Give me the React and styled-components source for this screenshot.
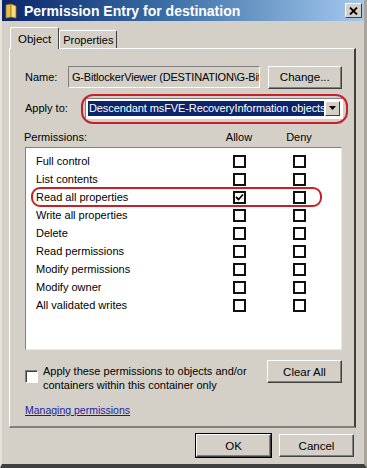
import styled, { createGlobalStyle } from 'styled-components';

const GlobalStyle = createGlobalStyle`
  html, body {
    margin: 0;
    padding: 0;
    background: #d4d0c8;
  }
  *, *::before, *::after { box-sizing: border-box; }
`;

const Window = styled.div`
  width: 367px;
  height: 468px;
  background: #d4d0c8;
  border-left: 2px solid #e4e1da;
  border-right: 3px solid #a9a59d;
  border-bottom: 4px solid #404040;
  font-family: 'Liberation Sans', Arial, sans-serif;
  font-size: 11px;
  color: #000;
  display: flex;
  flex-direction: column;
  overflow: hidden;
`;

const TitleBar = styled.div`
  height: 21px;
  flex-shrink: 0;
  margin-left: -2px;
  margin-right: -3px;
  display: flex;
  align-items: center;
  padding: 0 5px 0 5px;
  background: linear-gradient(to right, #0a246a 0%, #3a6ea5 45%, #a6caf0 100%);
`;

const Title = styled.span`
  flex: 1;
  margin-left: 5px;
  color: #fff;
  font-weight: bold;
  font-size: 14px;
`;

const CloseButton = styled.div`
  width: 17px;
  height: 15px;
  background: #d4d0c8;
  border-top: 1px solid #fff;
  border-left: 1px solid #fff;
  border-right: 1px solid #404040;
  border-bottom: 1px solid #404040;
  display: flex;
  align-items: center;
  justify-content: center;
`;

const Body = styled.div`
  flex: 1;
  display: flex;
  flex-direction: column;
  padding: 6px 8px 0 7px;
`;

const TabRow = styled.div`
  display: flex;
  align-items: flex-end;
  height: 21px;
  flex-shrink: 0;
  padding-left: 1px;
`;

const Tab = styled.div`
  height: ${p => (p.$active ? '22px' : '18px')};
  padding: 0 ${p => (p.$active ? '7px' : '3px')};
  display: flex;
  align-items: center;
  background: #d4d0c8;
  border-top: 1px solid #fff;
  border-left: 1px solid #fff;
  border-right: 1px solid #404040;
  border-radius: 2px 2px 0 0;
  margin-bottom: ${p => (p.$active ? '-1px' : '0')};
  position: relative;
  z-index: ${p => (p.$active ? 1 : 0)};
  font-size: ${p => (p.$active ? '11.5px' : '11px')};
`;

const Panel = styled.div`
  height: 380px;
  flex-shrink: 0;
  border-top: 1px solid #fff;
  border-left: 1px solid #fff;
  border-right: 2px solid #404040;
  border-bottom: 2px solid #808080;
  padding: 17px 12px 0 15px;
  display: flex;
  flex-direction: column;

  & > * { flex-shrink: 0; }
`;

const FieldRow = styled.div`
  display: flex;
  align-items: center;
  height: 22px;
  margin-bottom: ${p => p.$gap || 0}px;
`;

const Label = styled.span`
  width: ${p => p.$w}px;
  flex-shrink: 0;
  font-size: 11px;
`;

const TextBox = styled.div`
  width: 193px;
  height: 22px;
  padding: 0 3px;
  display: flex;
  align-items: center;
  background: #d4d0c8;
  border-top: 1px solid #808080;
  border-left: 1px solid #808080;
  border-right: 1px solid #fff;
  border-bottom: 1px solid #fff;
  white-space: nowrap;
  overflow: hidden;
  font-size: 11px;
  letter-spacing: -0.2px;
`;

const Button = styled.div`
  width: ${p => p.$w || 75}px;
  height: 23px;
  margin-left: ${p => p.$ml || 0}px;
  display: flex;
  align-items: center;
  justify-content: center;
  background: #d4d0c8;
  border-top: 1px solid #fff;
  border-left: 1px solid #fff;
  border-right: 1px solid #404040;
  border-bottom: 1px solid #404040;
  box-shadow: inset -1px -1px 0 #808080;
  outline: ${p => (p.$default ? '1px solid #000' : 'none')};
  font-size: 11.5px;
`;

const SelectWrap = styled.div`
  position: relative;
  width: 258px;
  height: 21px;

  &::after {
    content: '';
    position: absolute;
    inset: -4px -5px -5px -4px;
    border: 2px solid #c8202a;
    border-radius: 12px;
    pointer-events: none;
  }
`;

const Select = styled.div`
  height: 100%;
  display: flex;
  align-items: center;
  padding: 2px;
  background: #fff;
  border-top: 1px solid #808080;
  border-left: 1px solid #808080;
  border-right: 1px solid #fff;
  border-bottom: 1px solid #fff;
`;

const SelectValue = styled.div`
  flex: 1;
  height: 100%;
  display: flex;
  align-items: center;
  padding-left: 1px;
  background: #0a246a;
  color: #fff;
  font-size: 11px;
  letter-spacing: -0.1px;
  white-space: nowrap;
  overflow: hidden;
`;

const DropButton = styled.div`
  width: 15px;
  height: 100%;
  margin-left: 1px;
  display: flex;
  align-items: center;
  justify-content: center;
  background: #d4d0c8;
  border-top: 1px solid #fff;
  border-left: 1px solid #fff;
  border-right: 1px solid #404040;
  border-bottom: 1px solid #404040;
`;

const Grid = styled.div`
  display: grid;
  grid-template-columns: 1fr 60px 60px;
  align-items: center;
  padding-right: 13px;
`;

const HeaderRow = styled(Grid)`
  margin-top: 11px;
  height: 14px;
  margin-left: -1px;
  font-size: 11px;
`;

const ColHead = styled.span`
  text-align: center;
`;

const ListBox = styled.div`
  margin-top: 3px;
  height: 203px;
  background: #fff;
  border-top: 1px solid #808080;
  border-left: 1px solid #808080;
  border-right: 1px solid #e8e8e8;
  border-bottom: 1px solid #e8e8e8;
  padding-top: 4px;
`;

const PermRow = styled(Grid)`
  position: relative;
  height: 18px;
  padding-left: 10px;
  padding-right: 12px;
  font-size: 11px;

  ${p =>
    p.$marked &&
    `
    &::after {
      content: '';
      position: absolute;
      left: 5px;
      width: 291px;
      top: -1px;
      bottom: -1px;
      border: 2px solid #c8202a;
      border-radius: 9px;
    }
  `}
`;

const Cell = styled.div`
  display: flex;
  justify-content: center;
`;

const Check = styled.div`
  width: 13px;
  height: 13px;
  border: 2px solid #111;
  background: #fff;
  display: flex;
  align-items: center;
  justify-content: center;
`;

const Footer = styled.div`
  display: flex;
  justify-content: space-between;
  margin-top: 10px;
`;

const ApplyOption = styled.div`
  display: flex;
  align-items: flex-start;
  padding-top: 4px;
`;

const SunkenCheck = styled.div`
  width: 13px;
  height: 13px;
  margin-right: 5px;
  margin-top: 6px;
  background: #fff;
  border-top: 1px solid #808080;
  border-left: 1px solid #808080;
  border-right: 1px solid #fff;
  border-bottom: 1px solid #fff;
  box-shadow: inset 1px 1px 0 #404040;
  flex-shrink: 0;
`;

const ApplyText = styled.span`
  line-height: 14px;
  font-size: 11px;
`;

const HelpLink = styled.a`
  margin-top: 12px;
  align-self: flex-start;
  color: #1a1aa0;
  text-decoration: underline;
  font-size: 10.5px;
`;

const DialogButtons = styled.div`
  display: flex;
  justify-content: flex-end;
  margin-top: 6px;
  padding-right: 2px;
`;

const permissions = [
  { name: 'Full control' },
  { name: 'List contents' },
  { name: 'Read all properties', allow: true, marked: true },
  { name: 'Write all properties' },
  { name: 'Delete' },
  { name: 'Read permissions' },
  { name: 'Modify permissions' },
  { name: 'Modify owner' },
  { name: 'All validated writes' },
];

const FolderIcon = () => (
  <svg width="14" height="16" viewBox="0 0 14 16">
    <path d="M1 2 L6 1 L6 14 L1 15 Z" fill="#e8c048" stroke="#9a7a20" strokeWidth="0.8" />
    <path d="M6 1 L11 3 L11 15 L6 14 Z" fill="#f6dc7a" stroke="#9a7a20" strokeWidth="0.8" />
  </svg>
);

const Tick = () => (
  <svg width="9" height="9" viewBox="0 0 9 9">
    <path d="M1 4 L3.5 6.5 L8 1.5" fill="none" stroke="#000" strokeWidth="1.8" />
  </svg>
);

const App = () => (
  <>
    <GlobalStyle />
    <Window>
      <TitleBar>
        <FolderIcon />
        <Title>Permission Entry for destination</Title>
        <CloseButton>
          <svg width="9" height="8" viewBox="0 0 9 8">
            <path d="M1 0.5 L8 7.5 M8 0.5 L1 7.5" stroke="#000" strokeWidth="1.8" />
          </svg>
        </CloseButton>
      </TitleBar>
      <Body>
        <TabRow>
          <Tab $active>Object</Tab>
          <Tab>Properties</Tab>
        </TabRow>
        <Panel>
          <FieldRow $gap={9}>
            <Label $w={43}>Name:</Label>
            <TextBox>G-BitlockerViewer (DESTINATION\G-Bitl</TextBox>
            <Button $ml={8}>Change...</Button>
          </FieldRow>
          <FieldRow>
            <Label $w={60}>Apply to:</Label>
            <SelectWrap>
              <Select>
                <SelectValue>Descendant msFVE-RecoveryInformation objects</SelectValue>
                <DropButton>
                  <svg width="7" height="4" viewBox="0 0 7 4">
                    <path d="M0 0 H7 L3.5 4 Z" fill="#000" />
                  </svg>
                </DropButton>
              </Select>
            </SelectWrap>
          </FieldRow>
          <HeaderRow>
            <span>Permissions:</span>
            <ColHead>Allow</ColHead>
            <ColHead>Deny</ColHead>
          </HeaderRow>
          <ListBox>
            {permissions.map(p => (
              <PermRow key={p.name} $marked={p.marked}>
                <span>{p.name}</span>
                <Cell>
                  <Check>{p.allow && <Tick />}</Check>
                </Cell>
                <Cell>
                  <Check />
                </Cell>
              </PermRow>
            ))}
          </ListBox>
          <Footer>
            <ApplyOption>
              <SunkenCheck />
              <ApplyText>
                Apply these permissions to objects and/or
                <br />
                containers within this container only
              </ApplyText>
            </ApplyOption>
            <Button>Clear All</Button>
          </Footer>
          <HelpLink href="#">Managing permissions</HelpLink>
        </Panel>
        <DialogButtons>
          <Button $default>OK</Button>
          <Button $ml={8}>Cancel</Button>
        </DialogButtons>
      </Body>
    </Window>
  </>
);

export default App;
